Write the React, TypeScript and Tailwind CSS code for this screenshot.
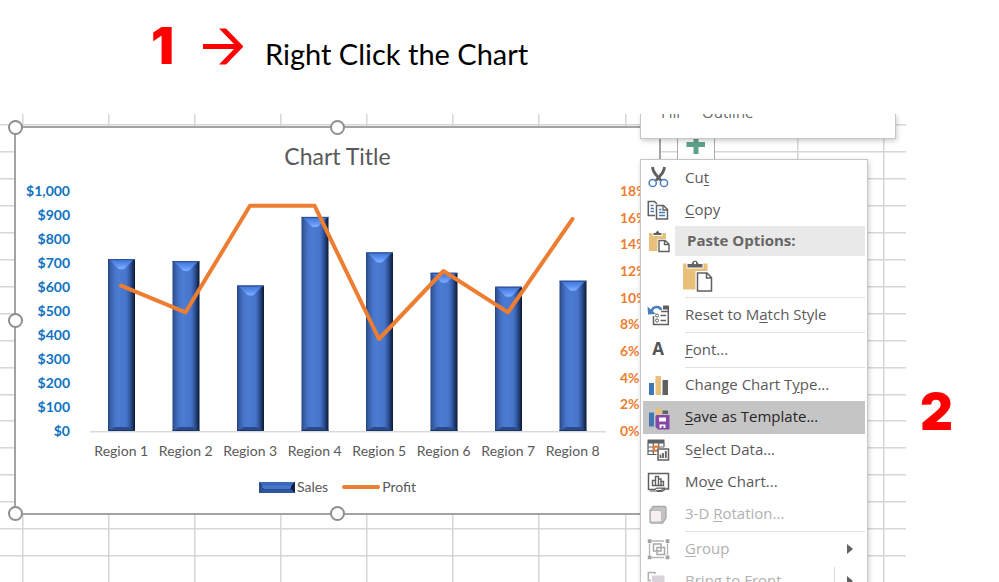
import type { ReactNode } from "react";

const sales = [716, 708, 606, 892, 744, 659, 601, 626];
const profit = [10.9, 8.9, 16.9, 16.9, 6.9, 12, 8.9, 15.9];
const dollars = ["$1,000", "$900", "$800", "$700", "$600", "$500", "$400", "$300", "$200", "$100", "$0"];
const percents = ["18%", "16%", "14%", "12%", "10%", "8%", "6%", "4%", "2%", "0%"];

const PLOT_BASE = 252;
const PLOT_HEIGHT = 240;
const SLOT = 64.5;

function SheetGrid() {
  const columns = Array.from({ length: 11 }, (_, i) => Math.round(21.5 + i * 86.15));
  const rows = Array.from({ length: 17 }, (_, i) => Math.round(10 + i * 26.95));
  return (
    <svg className="absolute inset-0 h-full w-full" aria-hidden="true">
      <g fill="#d6d6d6">
        {columns.map((x) => (
          <rect key={x} x={x} y="0" width="1.5" height="100%" />
        ))}
        {rows.map((y) => (
          <rect key={y} x="0" y={y} width="100%" height="1.5" />
        ))}
      </g>
    </svg>
  );
}

function Plot() {
  const points = profit
    .map((p, i) => `${SLOT * i + 31},${PLOT_BASE - (p / 18) * PLOT_HEIGHT}`)
    .join(" ");
  return (
    <svg className="h-[264px] w-[516px] shrink-0" viewBox="0 0 516 264" role="img" aria-label="Sales and profit by region">
      <defs>
        <linearGradient id="bar" x1="0" x2="1" y1="0" y2="0">
          <stop offset="0" stopColor="#22427f" />
          <stop offset="0.07" stopColor="#35599f" />
          <stop offset="0.25" stopColor="#4775cb" />
          <stop offset="0.4" stopColor="#4b7bd2" />
          <stop offset="0.68" stopColor="#4775cb" />
          <stop offset="0.8" stopColor="#3359a3" />
          <stop offset="0.91" stopColor="#1d3768" />
          <stop offset="1" stopColor="#081730" />
        </linearGradient>
        <linearGradient id="shine" x1="0" x2="0" y1="0" y2="1">
          <stop offset="0" stopColor="#3f6fca" />
          <stop offset="0.5" stopColor="#588df0" />
          <stop offset="1" stopColor="#7fb0ff" />
        </linearGradient>
      </defs>
      <rect x="0" y="252" width="516" height="1.5" fill="#d9d9d9" />
      {sales.map((value, i) => {
        const height = (value / 1000) * PLOT_HEIGHT;
        const x = SLOT * i + 18;
        const y = PLOT_BASE - height;
        return (
          <g key={i}>
            <rect x={x} y={y} width="27" height={height} fill="url(#bar)" />
            <path d={`M${x + 1} ${y}h25l-8 8q-1 2-3 2h-3q-2 0-3-2z`} fill="url(#shine)" />
            <path d={`M${x} ${y + 0.5}h27`} stroke="#2c4f96" />
            <path d={`M${x} ${PLOT_BASE}l7-4h13l7 4z`} fill="#294b8b" />
            <path d={`M${x} ${PLOT_BASE - 0.5}h27`} stroke="#1b3567" />
          </g>
        );
      })}
      <polyline points={points} fill="none" stroke="#ed7d31" strokeWidth="4" strokeLinecap="round" strokeLinejoin="round" />
    </svg>
  );
}

function Handle({ place }: { place: string }) {
  return <span className={`absolute size-[15px] rounded-full border-2 border-[#8f8f8f] bg-white ${place}`} />;
}

function Chart() {
  return (
    <figure className="relative mt-3 ml-3.5 h-[389px] w-[647px] border-2 border-[#a3a3a3] bg-white font-['Lato',sans-serif]">
      <figcaption className="pt-3.5 text-center text-[23px] leading-7 text-[#595959]">Chart Title</figcaption>
      <div className="mt-[9px] flex">
        <ol className="mr-5 w-[54px] text-right text-sm leading-6 font-bold text-[#0f72c0]">
          {dollars.map((d) => (
            <li key={d}>{d}</li>
          ))}
        </ol>
        <Plot />
        <ol className="ml-3.5 flex flex-col justify-between text-sm leading-6 font-bold text-[#ed7d31]">
          {percents.map((p) => (
            <li key={p}>{p}</li>
          ))}
        </ol>
      </div>
      <ol className="ml-[73px] grid w-[516px] grid-cols-8 text-center text-sm leading-4 whitespace-nowrap text-[#595959]">
        {sales.map((_, i) => (
          <li key={i}>Region {i + 1}</li>
        ))}
      </ol>
      <div className="mt-5 flex items-center justify-center text-sm leading-4 text-[#595959]">
        <svg className="mr-0.5 h-[11px] w-9" viewBox="0 0 36 11" aria-hidden="true">
          <rect width="36" height="11" fill="#2a4b8c" />
          <path d="M0 0h36l-4 4H4z" fill="#3c68bb" />
          <path d="M3 3.500h30v2L30 7H6L3 5.500z" fill="#4676cc" />
          <path d="M36 0v11l-4-4V4z" fill="#0e2145" />
          <path d="M0 11l4-3h28l4 3z" fill="#2f569f" />
        </svg>
        <span className="mr-3.5">Sales</span>
        <span className="mr-0.5 h-1 w-[38px] rounded-full bg-[#ed7d31]" />
        <span>Profit</span>
      </div>
      <Handle place="-top-2 -left-2" />
      <Handle place="-top-2 left-[314px]" />
      <Handle place="top-[185px] -left-2" />
      <Handle place="-bottom-2 -left-2" />
      <Handle place="-bottom-2 left-[314px]" />
      <Handle place="-right-2 -bottom-2" />
    </figure>
  );
}

function Icon({ children }: { children: ReactNode }) {
  return (
    <svg className="size-6 shrink-0" viewBox="0 0 24 24" fill="none" aria-hidden="true">
      {children}
    </svg>
  );
}

const CutIcon = (
  <Icon>
    <path d="M5.500 1Q6 6 10.500 10.500L14 14.500M17.500 1Q17 6 12.500 10.500L9 14.500" stroke="#606060" strokeWidth="2.800" />
    <circle cx="5.700" cy="17" r="3.600" stroke="#4a7ebb" strokeWidth="1.500" />
    <circle cx="17" cy="17" r="3.600" stroke="#4a7ebb" strokeWidth="1.500" />
  </Icon>
);
const CopyIcon = (
  <Icon>
    <path d="M8 17.500H1.300V3.500H7.500L10 6" stroke="#606060" strokeWidth="1.500" />
    <path d="M3.500 7.500h3M3.500 10.500h3.500M3.500 13.500h3.500" stroke="#4a7ebb" strokeWidth="1.400" />
    <path d="M9.500 7.500H16.500L20.500 11.500V21H9.500z" fill="#fff" stroke="#606060" strokeWidth="1.500" />
    <path d="M16 7.500V12h4.500" stroke="#606060" strokeWidth="1.300" />
    <path d="M12 11.500h2.500M12 14.500h6M12 17.500h6" stroke="#4a7ebb" strokeWidth="1.400" />
  </Icon>
);
const PasteIcon = (
  <Icon>
    <rect x="2" y="4" width="17" height="18" fill="#e8c07c" />
    <path d="M6 3.500H8.500Q9 1.500 10.500 1.500T12.500 3.500H15V6.500H6z" fill="#606060" stroke="#fff" />
    <path d="M10.500 10h8.500l4 4v9.500H10.500z" fill="#fff" />
    <path d="M12 11.500h6L22 15v7.500H12zM17.500 11.500V15.500H22" stroke="#606060" strokeWidth="1.400" />
  </Icon>
);
const ResetIcon = (
  <Icon>
    <path d="M4 9.500Q5.500 4 9.500 4T14 7" stroke="#4a7ebb" strokeWidth="2.600" />
    <path d="M0.500 3.500L1 11.500L9 11z" fill="#4a7ebb" />
    <path d="M16 2.500h6v4h-6z" fill="#606060" />
    <path d="M14 8.500H21.300V21.500H6.500V13M21.300 6v3" stroke="#606060" strokeWidth="1.500" />
    <circle cx="10" cy="12.500" r="1.500" stroke="#606060" />
    <circle cx="10" cy="17.500" r="1.500" stroke="#606060" />
    <path d="M13.500 12.500h5.500M13.500 17.500h5.500" stroke="#606060" strokeWidth="1.500" />
  </Icon>
);
const FontIcon = (
  <span className="w-6 shrink-0 pr-0.5 pb-0.5 text-center text-[17px] leading-6 font-bold text-[#555]" aria-hidden="true">
    A
  </span>
);
const ChangeIcon = (
  <Icon>
    <rect x="2" y="10" width="5" height="12" fill="#3f78b5" />
    <rect x="8.500" y="3" width="5.500" height="19" fill="#e8c07c" />
    <rect x="15.500" y="7" width="5.500" height="15" fill="#606060" />
  </Icon>
);
const SaveIcon = (
  <Icon>
    <rect x="2" y="6.500" width="5" height="14" fill="#3f78b5" />
    <rect x="9" y="2" width="5" height="7" fill="#e8c07c" />
    <rect x="15.500" y="4.500" width="5.500" height="3.500" fill="#606060" />
    <path d="M9.500 9H22.500V23.500H11L8.500 21V10z" fill="#8648a8" />
    <path d="M12 11.500h7v4h-7zM12.500 18.500h6V22h-2v-2h-2v2h-2z" fill="#fff" />
  </Icon>
);
const SelectIcon = (
  <Icon>
    <path d="M0.500 1.500h17v4h-17z" fill="#606060" />
    <path d="M1 5v11.500h8.500M17 5v4M1 9h16M1 12.800h9M6.300 5v11.500M11.700 5v5" stroke="#606060" strokeWidth="1.200" />
    <path d="M12 8.500H7v4h4" stroke="#ed7d31" strokeWidth="1.800" />
    <path d="M11 11h10.500v11H11z" fill="#fff" stroke="#606060" strokeWidth="1.500" />
    <path d="M13.500 20v-3.500M16 20v-5M18.800 20v-7" stroke="#606060" strokeWidth="1.800" />
  </Icon>
);
const MoveIcon = (
  <Icon>
    <path d="M8 19.500H1.500V3.500H21.500V19H17" stroke="#606060" strokeWidth="1.500" />
    <path d="M5.500 15.500v-5h3v-4h3v9zM8.500 10v6M11.500 9h2.500v6.500M14 11.500h2.500v4H5" stroke="#606060" strokeWidth="1.400" />
    <path d="M3 19.500H8Q9 17.800 11 18.200H17.500L14 20.500H9.500M3 21H9l2 .5h4l3-2" stroke="#606060" strokeWidth="1.200" />
  </Icon>
);
const RotateIcon = (
  <Icon>
    <path d="M3 8.500L6 4.500H17.500Q19 4.500 19 6V16L15.500 21H4.500Q3 21 3 19.500z" fill="#c4c4c4" stroke="#a9a9a9" strokeWidth="1.300" />
    <path d="M5 8.500h8q1.500 0 1.500 1.500v8.500q0 1.500-1.500 1.500H5q-1.500 0-1.500-1.500V10Q3.500 8.500 5 8.500z" fill="#f3eff3" stroke="#b9b9b9" />
  </Icon>
);
const GroupIcon = (
  <Icon>
    <path d="M5 4h12M5 20.500h12M2.500 6.500v11.500M20.500 6.500v11.500" stroke="#b5b5b5" strokeWidth="1.300" />
    <path d="M6.500 7h7.500v7H6.500zM10 10.500h7.500V17.500H10z" stroke="#a8a8a8" strokeWidth="1.500" />
    <path d="M.8 2.200h3.800V6H.8zM18.600 2.200h3.800V6h-3.800zM.8 18.500h3.800v3.800H.8zM18.600 18.500h3.800v3.800h-3.800z" fill="#a3a3a3" />
  </Icon>
);
const BringIcon = (
  <Icon>
    <path d="M4 11.500H1.300V3.500H8V5" stroke="#b0b0b0" strokeWidth="1.500" />
    <rect x="5" y="6.500" width="12.500" height="12" fill="#d9d3d9" />
  </Icon>
);

/* An access key is written between underscores: "_C_opy". */
function Label({ text }: { text: string }) {
  const [before, key, after] = text.split("_");
  return (
    <span className="pb-0.5">
      {before}
      <u className="underline-offset-2">{key}</u>
      {after}
    </span>
  );
}

type ItemProps = { icon: ReactNode; text: string; tone?: string; submenu?: boolean; split?: boolean; disabled?: boolean };

function Item({ icon, text, tone = "h-8 text-[#5a5a5a]", submenu, split, disabled }: ItemProps) {
  return (
    <button type="button" role="menuitem" disabled={disabled} className={`flex w-full items-center gap-3.5 pl-1 text-left ${tone}`}>
      {icon}
      <Label text={text} />
      {submenu && (
        <span className={`ml-auto flex h-7 items-center pr-3 ${split ? "border-l border-[#d9d9d9] pl-3" : ""}`}>
          <svg className="h-3 w-1.5" viewBox="0 0 6 12" aria-hidden="true">
            <path d="M0 1v10l6-5z" fill="#606060" />
          </svg>
        </span>
      )}
    </button>
  );
}

function Separator() {
  return <hr className="my-px ml-[42px] border-[#dfe1e6]" />;
}

function ContextMenu() {
  const off = "h-8 text-[#b1b1b1]";
  return (
    <div
      role="menu"
      className="absolute top-[45px] left-[640px] w-[228px] border border-[#c6c6c6] bg-white px-0.5 pt-0.5 font-['Open_Sans',sans-serif] text-[15px] shadow-[1px_2px_5px_rgba(0,0,0,0.2)]"
    >
      <Item icon={CutIcon} text="Cu_t_" />
      <Item icon={CopyIcon} text="_C_opy" />
      <div className="flex h-[30px] items-center pl-1">
        {PasteIcon}
        <span className="ml-1 flex h-full grow items-center bg-[#e9e9e9] pb-0.5 pl-3 font-bold text-[#666]">Paste Options:</span>
      </div>
      <div className="flex h-10 items-center pl-10">
        <button type="button" aria-label="Keep destination theme">
          <svg className="block h-8 w-[30px]" viewBox="0 0 30 32" fill="none" aria-hidden="true">
            <rect y="3.500" width="24.500" height="26" fill="#e8c07c" />
            <path d="M4 3.500H8.500Q9 0 12 0T15.500 3.500H20V8H4z" fill="#606060" stroke="#fff" />
            <circle cx="12" cy="3" r="1.200" fill="#fff" />
            <path d="M12.500 11H25l5 5v16H12.500z" fill="#fff" />
            <path d="M14.500 13H24l4.500 4.500V31h-14zM23.500 13V18h5" stroke="#606060" strokeWidth="1.500" />
          </svg>
        </button>
      </div>
      <Separator />
      <Item icon={ResetIcon} text="Reset to M_a_tch Style" />
      <Separator />
      <Item icon={FontIcon} text="_F_ont..." />
      <Separator />
      <Item icon={ChangeIcon} text="Change Chart T_y_pe..." />
      <Item icon={SaveIcon} text="_S_ave as Template..." tone="h-[33px] bg-[#c5c5c5] text-[#262626]" />
      <Item icon={SelectIcon} text="S_e_lect Data..." />
      <Item icon={MoveIcon} text="Mo_v_e Chart..." />
      <Item icon={RotateIcon} text="3-D _R_otation..." tone={off} disabled />
      <Separator />
      <Item icon={GroupIcon} text="_G_roup" tone={off} submenu disabled />
      <Item icon={BringIcon} text="B_r_ing to Front" tone={off} submenu split disabled />
    </div>
  );
}

export default function App() {
  return (
    <main className="flex h-screen flex-col overflow-hidden bg-white">
      <header className="flex h-[114px] shrink-0 items-start pt-5 pl-[151px]">
        <span className="w-[52px] font-['Inter',sans-serif] text-[51px] leading-[52px] font-black text-[#f00]">1</span>
        <svg className="mt-2 h-[37px] w-10" viewBox="0 0 40 37" aria-label="then">
          <path d="M0 16H31L16 0.500H23L40.500 18.500L23 36.500H16L31 21H0z" fill="#f00" />
        </svg>
        <h1 className="ml-[22px] pt-3.5 font-['Lato',sans-serif] text-[29px] leading-10 text-black">Right Click the Chart</h1>
      </header>
      <div className="flex grow">
        <section className="relative grow overflow-hidden">
          <SheetGrid />
          <Chart />
          <button
            type="button"
            aria-label="Chart elements"
            className="absolute top-3 left-[677px] flex size-[38px] items-center justify-center border border-[#ababab] bg-white"
          >
            <svg className="size-5" viewBox="0 0 20 20" aria-hidden="true">
              <path d="M7.500 1h5v6h6.500v5h-6.500v7h-5v-7H.5V7h7z" fill="#5fa38b" />
            </svg>
          </button>
          <div className="absolute top-0 left-[640px] flex h-[25px] w-[256px] items-end gap-[22px] overflow-hidden border border-t-0 border-[#c6c6c6] bg-white pb-4 pl-5 font-['Open_Sans',sans-serif] text-[15px] leading-5 text-[#6a6a6a] shadow-[1px_2px_5px_rgba(0,0,0,0.2)]">
            <span>Fill</span>
            <span>Outline</span>
          </div>
          <ContextMenu />
        </section>
        <aside className="w-[93px] shrink-0 pt-[272px] pl-3.5 font-['Inter',sans-serif] text-[51px] leading-[52px] font-black text-[#f00]">2</aside>
      </div>
    </main>
  );
}
